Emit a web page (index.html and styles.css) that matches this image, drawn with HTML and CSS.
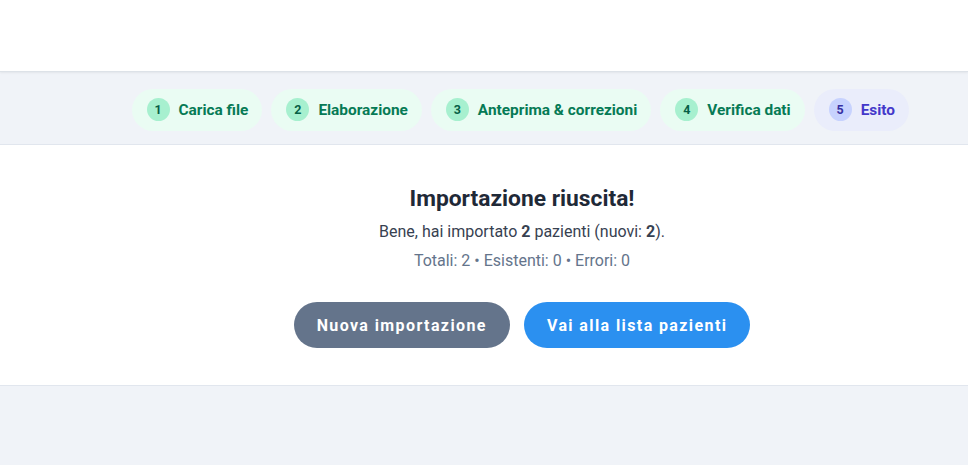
FILE: index.html
```html
<!DOCTYPE html>
<html lang="it">
<head>
<meta charset="utf-8">
<title>Importazione</title>
<link rel="stylesheet" href="styles.css">
</head>
<body>
<header class="topbar"></header>
<nav class="stepper">
  <ol class="steps">
    <li class="step done"><span class="num">1</span><span class="label">Carica file</span></li>
    <li class="step done"><span class="num">2</span><span class="label">Elaborazione</span></li>
    <li class="step done"><span class="num">3</span><span class="label">Anteprima &amp; correzioni</span></li>
    <li class="step done"><span class="num">4</span><span class="label">Verifica dati</span></li>
    <li class="step current"><span class="num">5</span><span class="label">Esito</span></li>
  </ol>
</nav>
<main class="result">
  <h1 class="title">Importazione riuscita!</h1>
  <p class="summary">Bene, hai importato <strong>2</strong> pazienti (nuovi: <strong>2</strong>).</p>
  <p class="stats">Totali: 2 • Esistenti: 0 • Errori: 0</p>
  <div class="actions">
    <button class="btn btn-secondary">Nuova importazione</button>
    <button class="btn btn-primary">Vai alla lista pazienti</button>
  </div>
</main>
</body>
</html>
```
FILE: styles.css
```css
* { box-sizing: border-box; }
html, body { margin: 0; padding: 0; }
body {
  font-family: Roboto, "Liberation Sans", sans-serif;
  background: #f0f3f8;
  height: 465px;
  overflow: hidden;
}
.topbar {
  height: 72px;
  background: #fff;
  border-bottom: 1px solid #dde2e8;
  box-shadow: 0 1px 2px rgba(0,0,0,0.06);
}
.stepper {
  height: 73px;
  border-bottom: 1px solid #e1e6ee;
  display: flex;
  align-items: center;
  justify-content: flex-end;
  padding: 3px 59px 0 0;
}
.steps {
  list-style: none;
  margin: 0;
  padding: 0;
  display: flex;
  gap: 9px;
}
.step {
  display: flex;
  align-items: center;
  gap: 9px;
  height: 42px;
  padding: 0 14px 0 15px;
  border-radius: 21px;
  font-weight: 700;
  font-size: 15.4px;
}
.step .num {
  width: 23px;
  height: 23px;
  border-radius: 50%;
  display: flex;
  align-items: center;
  justify-content: center;
  font-size: 12.5px;
  font-weight: 700;
  padding-bottom: 1px;
}
.step.done { background: #eafcf3; color: #067a55; }
.step.done .num { background: #a7f0cf; color: #065f46; }
.step.current { background: #eaedfb; color: #4338ca; }
.step.current .num { background: #c7d2fe; color: #3730a3; }
.result {
  background: #fff;
  height: 241px;
  border-bottom: 1px solid #e1e6ee;
  padding: 40px 0 0 76px;
  display: flex;
  flex-direction: column;
  align-items: center;
}
.title {
  margin: 0;
  font-size: 22.8px;
  font-weight: 700;
  color: #1f2937;
  line-height: 28px;
}
.summary {
  margin: 7px 0 0;
  font-size: 16px;
  color: #374151;
  line-height: 24px;
}
.summary strong { color: #374151; }
.stats {
  margin: 5px 0 0;
  font-size: 16px;
  color: #64748b;
  line-height: 24px;
}
.actions {
  display: flex;
  gap: 14px;
  margin-top: 29px;
}
.btn {
  height: 46px;
  border: none;
  border-radius: 23px;
  font-family: inherit;
  font-size: 16px;
  font-weight: 700;
  letter-spacing: 1.4px;
  color: #fff;
  padding: 0 23px;
}
.btn-secondary { background: #64748b; }
.btn-primary { background: #2b90f0; }
```
